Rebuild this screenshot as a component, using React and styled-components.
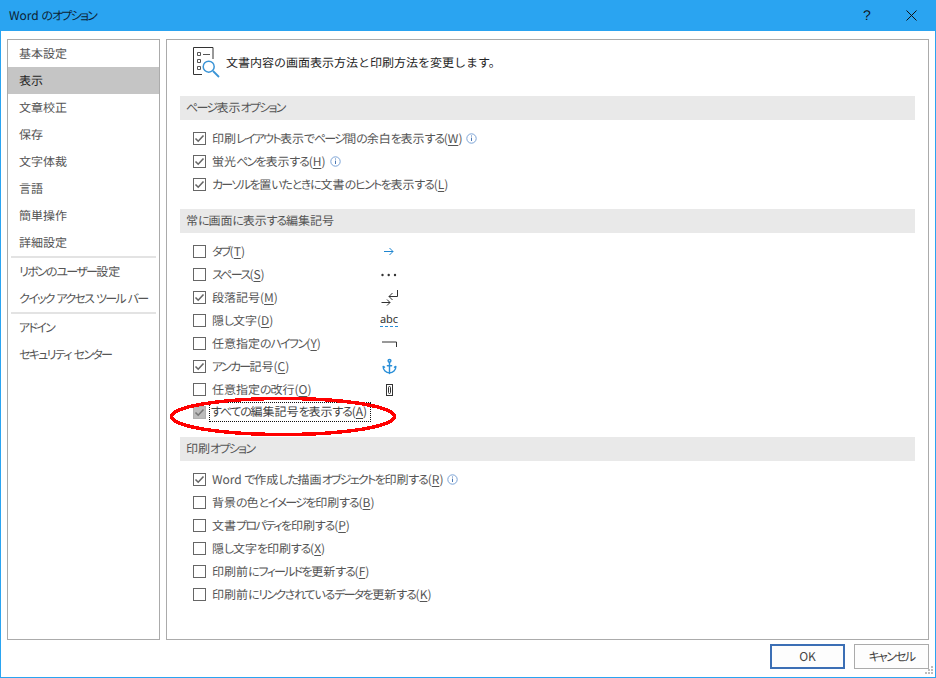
import React from "react";
import styled, { createGlobalStyle } from "styled-components";
import { Anchor } from "lucide-react";

const GlobalStyle = createGlobalStyle`
  html, body {
    margin: 0;
    padding: 0;
    background: #fff;
  }
  u {
    text-underline-offset: 2px;
  }
`;

const Dialog = styled.div`
  position: relative;
  box-sizing: border-box;
  width: 936px;
  height: 678px;
  display: flex;
  flex-direction: column;
  border: 1px solid #2aa4f1;
  border-top: none;
  background: #fff;
  color: #444;
  font-family: "Noto Sans CJK JP", "Noto Sans", sans-serif;
  font-feature-settings: "palt";
  font-size: 12px;
  text-rendering: geometricPrecision;
`;

const TitleBar = styled.div`
  height: 31px;
  flex: none;
  display: flex;
  align-items: center;
  background: #2aa4f1;
  margin: 0 -1px;
  padding: 0 3px 1px 9px;
  box-sizing: border-box;
  color: #0c2233;
`;

const TitleText = styled.div`
  flex: 1;
  white-space: pre;
`;

const TitleButton = styled.div`
  width: 44px;
  display: flex;
  justify-content: center;
  align-items: center;
  font-size: 14px;
  font-family: "Liberation Sans", sans-serif;
  color: #111;
`;

const Body = styled.div`
  flex: none;
  display: flex;
  gap: 6px;
  padding: 8px 6px 0 6px;
`;

const Nav = styled.div`
  box-sizing: border-box;
  width: 153px;
  height: 601px;
  flex: none;
  border: 1px solid #ababab;
`;

const NavItem = styled.div`
  box-sizing: border-box;
  height: 27px;
  display: flex;
  align-items: center;
  padding: 0 0 1px 11px;
  white-space: pre;
  background: ${(p) => (p.$active ? "#c5c5c5" : "transparent")};
  color: ${(p) => (p.$active ? "#262626" : "#555")};
`;

const NavDivider = styled.div`
  height: 2px;
  margin: 0 3px;
  background: #e3e3e3;
`;

const Panel = styled.div`
  box-sizing: border-box;
  width: 763px;
  height: 601px;
  flex: none;
  border: 1px solid #ababab;
  padding: 7px 13px 0 13px;
`;

const PanelHead = styled.div`
  height: 49px;
  display: flex;
  align-items: flex-start;
  gap: 5px;
  padding-left: 13px;
  color: #262626;
`;

const HeadText = styled.div`
  line-height: 16px;
  margin-top: 8px;
  font-feature-settings: normal;
`;

const SectionTitle = styled.div`
  box-sizing: border-box;
  height: 24px;
  display: flex;
  align-items: center;
  padding: 0 0 2px 6px;
  background: #e9e9e9;
  color: #555;
`;

const Rows = styled.div`
  padding: 7px 0 13px 13px;
`;

const Row = styled.div`
  position: relative;
  height: 23px;
  display: grid;
  grid-template-columns: 13px 159px 24px;
  column-gap: 6px;
  align-items: center;
  color: #555;
`;

const Box = styled.div`
  box-sizing: border-box;
  width: 13px;
  height: 13px;
  display: flex;
  align-items: center;
  justify-content: center;
  border: 1px solid ${(p) => (p.$disabled ? "#b0b0b0" : "#666")};
  background: ${(p) => (p.$disabled ? "#bcbcbc" : "#fff")};
`;

const LabelLine = styled.div`
  display: flex;
  align-items: center;
  gap: 4px;
  white-space: pre;
  padding-bottom: 1px;
  grid-column: ${(p) => (p.$wide ? "2 / 4" : "2")};

  svg {
    flex: none;
  }
`;

const FocusLabel = styled.span`
  outline: 1px dotted #111;
  padding: 0 3px 0 1px;
  margin-left: -2px;
  line-height: 18px;
  color: #444;
`;

const Kana = styled.span`
  letter-spacing: ${(p) => (p.$hira ? "-1.2px" : "-1.7px")};
`;

const Mark = styled.div`
  display: flex;
  align-items: center;
  justify-content: center;
  height: 20px;
  width: 24px;
`;

const AbcMark = styled.div`
  font-size: 11px;
  line-height: 11px;
  color: #333;
  border-bottom: 1px dashed #2a8fd8;
  font-family: "Noto Sans", sans-serif;
  padding-bottom: 1px;
`;

const Ellipse = styled.svg`
  position: absolute;
  left: -25px;
  top: -6px;
  pointer-events: none;
`;

const Footer = styled.div`
  display: flex;
  justify-content: flex-end;
  gap: 9px;
  padding: 4px 6px 0 0;
`;

const Button = styled.div`
  box-sizing: border-box;
  width: 75px;
  height: 25px;
  padding-bottom: 1px;
  display: flex;
  align-items: center;
  justify-content: center;
  background: #fdfdfd;
  color: #444;
  border: ${(p) => (p.$primary ? "2px solid #3c6fb5" : "1px solid #ababab")};
`;

const Grip = styled.svg`
  position: absolute;
  right: 1px;
  bottom: 2px;
`;

// the reference font sets kana much narrower than kanji, so kana runs get tightened
const Jp = ({ children }) =>
  children
    .split(/([ァ-ヶー]+|[ぁ-ん]+)/)
    .filter(Boolean)
    .map((run, i) =>
      /^[ァ-ヶー]/.test(run) ? (
        <Kana key={i}>{run}</Kana>
      ) : /^[ぁ-ん]/.test(run) ? (
        <Kana key={i} $hira>
          {run}
        </Kana>
      ) : (
        <React.Fragment key={i}>{run}</React.Fragment>
      )
    );

const Check = ({ color = "#666" }) => (
  <svg width="11" height="11" viewBox="0 0 11 11">
    <path d="M1.5 5.5 L4.2 8.2 L9.5 2.5" fill="none" stroke={color} strokeWidth="1.6" />
  </svg>
);

const Info = () => (
  <svg width="11" height="11" viewBox="0 0 11 11">
    <circle cx="5.5" cy="5.5" r="4.7" fill="none" stroke="#7ba3d6" />
    <path d="M5.5 2.5v1M5.5 4.6v3.4" stroke="#4a78b5" strokeWidth="1" />
  </svg>
);

const PageIcon = () => (
  <svg width="28" height="31" viewBox="0 0 28 31">
    <path d="M20 12V.5H.5v27H9" fill="none" stroke="#333" />
    <path d="M4.5 5.500h3v3h-3zM4.5 12.500h3v3h-3zM4.5 19.500h3v3h-3z" fill="none" stroke="#555" />
    <path d="M10 7.500h7" stroke="#555" />
    <circle cx="15.700" cy="19.700" r="5.500" fill="none" stroke="#3a94d6" strokeWidth="1.500" />
    <path d="M20 24 L26 30" stroke="#3a94d6" strokeWidth="1.800" />
  </svg>
);

const TabMark = () => (
  <svg width="12" height="9" viewBox="0 0 12 9">
    <path d="M1 4.500h9M6.500 1l3.500 3.500L6.500 8" fill="none" stroke="#1f86d0" />
  </svg>
);

const SpaceMark = () => (
  <svg width="16" height="4" viewBox="0 0 16 4">
    <circle cx="1.500" cy="2" r="1.200" fill="#333" />
    <circle cx="7.700" cy="2" r="1.200" fill="#333" />
    <circle cx="14" cy="2" r="1.200" fill="#333" />
  </svg>
);

const ParaMark = () => (
  <svg width="17" height="16" viewBox="0 0 17 16">
    <path d="M16.500 0v6.500H8M11.500 3L8 6.500l3.500 3.500" fill="none" stroke="#333" />
    <path d="M.5 12.500H9M6 9.500l3 3-3 3" fill="none" stroke="#333" />
  </svg>
);

const HyphenMark = () => (
  <svg width="15" height="6" viewBox="0 0 15 6">
    <path d="M0 1h14.500v5" fill="none" stroke="#333" />
  </svg>
);

const BreakMark = () => (
  <svg width="7" height="12" viewBox="0 0 7 12">
    <rect x=".5" y=".5" width="6" height="11" fill="none" stroke="#333" />
    <rect x="2.500" y="2.500" width="2" height="7" rx="1" fill="none" stroke="#333" />
  </svg>
);

const Label = ({ text, mnemonic }) => (
  <span>
    <Jp>{text}</Jp>(<u>{mnemonic}</u>)
  </span>
);

const OptionRow = ({ checked, text, mnemonic, info, mark, wide }) => (
  <Row>
    <Box>{checked && <Check />}</Box>
    <LabelLine $wide={wide}>
      <Label text={text} mnemonic={mnemonic} />
      {info && <Info />}
    </LabelLine>
    {mark && <Mark>{mark}</Mark>}
  </Row>
);

const pageOptions = [
  { checked: true, text: "印刷レイアウト表示でページ間の余白を表示する", mnemonic: "W", info: true },
  { checked: true, text: "蛍光ペンを表示する", mnemonic: "H", info: true },
  { checked: true, text: "カーソルを置いたときに文書のヒントを表示する", mnemonic: "L" },
];

const markOptions = [
  { text: "タブ", mnemonic: "T", mark: <TabMark /> },
  { text: "スペース", mnemonic: "S", mark: <SpaceMark /> },
  { checked: true, text: "段落記号", mnemonic: "M", mark: <ParaMark /> },
  { text: "隠し文字", mnemonic: "D", mark: <AbcMark>abc</AbcMark> },
  { text: "任意指定のハイフン", mnemonic: "Y", mark: <HyphenMark /> },
  {
    checked: true,
    text: "アンカー記号",
    mnemonic: "C",
    mark: <Anchor size={17} color="#2a8fd8" strokeWidth={2} />,
  },
  { text: "任意指定の改行", mnemonic: "O", mark: <BreakMark /> },
];

const printOptions = [
  { checked: true, text: "Word で作成した描画オブジェクトを印刷する", mnemonic: "R", info: true },
  { text: "背景の色とイメージを印刷する", mnemonic: "B" },
  { text: "文書プロパティを印刷する", mnemonic: "P" },
  { text: "隠し文字を印刷する", mnemonic: "X" },
  { text: "印刷前にフィールドを更新する", mnemonic: "F" },
  { text: "印刷前にリンクされているデータを更新する", mnemonic: "K" },
];

const navGroups = [
  ["基本設定", "表示", "文章校正", "保存", "文字体裁", "言語", "簡単操作", "詳細設定"],
  ["リボンのユーザー設定", "クイック アクセス ツール バー"],
  ["アドイン", "セキュリティ センター"],
];

const App = () => (
  <>
    <GlobalStyle />
    <Dialog>
      <TitleBar>
        <TitleText>
          <Jp>Word のオプション</Jp>
        </TitleText>
        <TitleButton>?</TitleButton>
        <TitleButton>
          <svg width="11" height="11" viewBox="0 0 11 11">
            <path d="M.5.5l10 10M10.500.5l-10 10" stroke="#111" fill="none" />
          </svg>
        </TitleButton>
      </TitleBar>
      <Body>
        <Nav>
          {navGroups.map((group, i) => (
            <React.Fragment key={i}>
              {i > 0 && <NavDivider />}
              {group.map((item) => (
                <NavItem key={item} $active={item === "表示"}>
                  <span>
                    <Jp>{item}</Jp>
                  </span>
                </NavItem>
              ))}
            </React.Fragment>
          ))}
        </Nav>
        <Panel>
          <PanelHead>
            <PageIcon />
            <HeadText>文書内容の画面表示方法と印刷方法を変更します。</HeadText>
          </PanelHead>
          <SectionTitle>
            <span>
              <Jp>ページ表示オプション</Jp>
            </span>
          </SectionTitle>
          <Rows>
            {pageOptions.map((o) => (
              <OptionRow key={o.mnemonic} wide {...o} />
            ))}
          </Rows>
          <SectionTitle>
            <span>
              <Jp>常に画面に表示する編集記号</Jp>
            </span>
          </SectionTitle>
          <Rows>
            {markOptions.map((o) => (
              <OptionRow key={o.mnemonic} {...o} />
            ))}
            <Row>
              <Box $disabled>
                <Check color="#777" />
              </Box>
              <LabelLine $wide>
                <FocusLabel>
                  <Label text="すべての編集記号を表示する" mnemonic="A" />
                </FocusLabel>
              </LabelLine>
              <Ellipse width="232" height="44" viewBox="0 0 232 44">
                <ellipse
                  cx="115"
                  cy="21.500"
                  rx="111.500"
                  ry="18"
                  fill="none"
                  stroke="#f00"
                  strokeWidth="3.500"
                  shapeRendering="crispEdges"
                />
              </Ellipse>
            </Row>
          </Rows>
          <SectionTitle>
            <span>
              <Jp>印刷オプション</Jp>
            </span>
          </SectionTitle>
          <Rows>
            {printOptions.map((o) => (
              <OptionRow key={o.mnemonic} wide {...o} />
            ))}
          </Rows>
        </Panel>
      </Body>
      <Footer>
        <Button $primary>OK</Button>
        <Button>
          <span>
            <Jp>キャンセル</Jp>
          </span>
        </Button>
      </Footer>
      <Grip width="10" height="10" viewBox="0 0 10 10">
        <path d="M7 1h2v2H7zM4 4h2v2H4zM7 4h2v2H7zM1 7h2v2H1zM4 7h2v2H4zM7 7h2v2H7z" fill="#bdbdbd" />
      </Grip>
    </Dialog>
  </>
);

export default App;
